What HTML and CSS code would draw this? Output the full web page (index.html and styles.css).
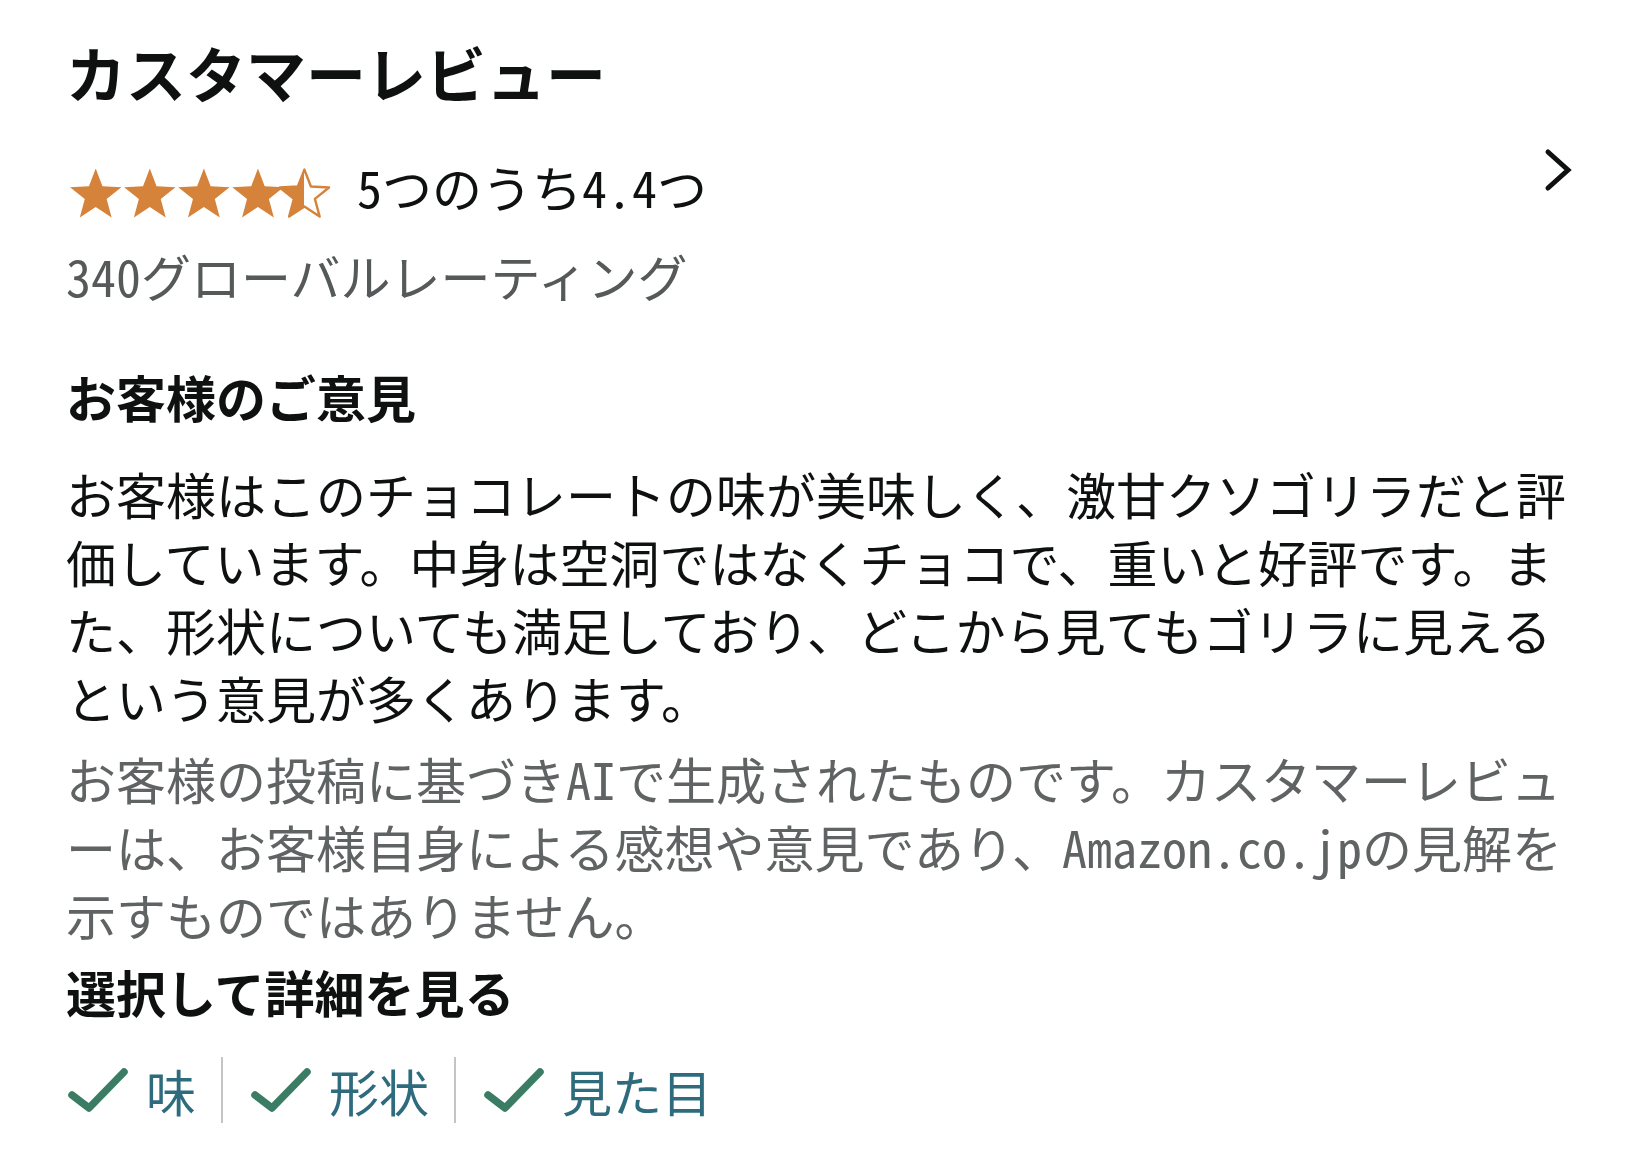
FILE: index.html
```html
<!DOCTYPE html>
<html lang="ja">
<head>
<meta charset="utf-8">
<title>カスタマーレビュー</title>
<link rel="stylesheet" href="styles.css">
</head>
<body>
<main class="page">
  <h1 class="title">カスタマーレビュー</h1>
  <div class="rating-row">
    <svg class="stars" width="276" height="52" viewBox="0 0 264 50" aria-hidden="true">
      <defs>
        <polygon id="star" points="25,0.5 31.5,17.5 49.7,18.5 35.5,29.8 40.3,47.5 25,37.5 9.7,47.5 14.5,29.8 0.3,18.5 18.5,17.5"/>
        <linearGradient id="half" x1="0" x2="1" y1="0" y2="0">
          <stop offset="50%" stop-color="#d5823a"/>
          <stop offset="50%" stop-color="#ffffff"/>
        </linearGradient>
      </defs>
      <use href="#star" x="0" fill="#d5823a"/>
      <use href="#star" x="52" fill="#d5823a"/>
      <use href="#star" x="104" fill="#d5823a"/>
      <use href="#star" x="156" fill="#d5823a"/>
      <use href="#star" x="209" fill="url(#half)" stroke="#d5823a" stroke-width="2.4" stroke-linejoin="round" transform="translate(1 1) scale(0.96)" style="transform-box: fill-box"/>
    </svg>
    <span class="rating-text">5つのうち4.4つ</span>
    <svg class="chevron" width="34" height="46" viewBox="0 0 34 46" aria-hidden="true">
      <path d="M7 5 L27 23 L7 41" fill="none" stroke="#0f1111" stroke-width="5" stroke-linecap="round" stroke-linejoin="miter"/>
    </svg>
  </div>
  <p class="count">340グローバルレーティング</p>

  <h2 class="heading">お客様のご意見</h2>
  <p class="summary">お客様はこのチョコレートの味が美味しく、激甘クソゴリラだと評価しています。中身は空洞ではなくチョコで、重いと好評です。また、形状についても満足しており、どこから見てもゴリラに見えるという意見が多くあります。</p>
  <p class="note">お客様の投稿に基づきAIで生成されたものです。カスタマーレビューは、お客様自身による感想や意見であり、Amazon.co.jpの見解を示すものではありません。</p>

  <h2 class="heading select-heading">選択して詳細を見る</h2>
  <ul class="tags">
    <li class="tag">
      <svg class="check" width="60" height="48" viewBox="0 0 60 48" aria-hidden="true"><path d="M4 29 L21 42 L56 6" fill="none" stroke="#3a7d64" stroke-width="7.5" stroke-linecap="round" stroke-linejoin="round"/></svg>
      <span class="tag-label">味</span>
    </li>
    <li class="divider"></li>
    <li class="tag">
      <svg class="check" width="60" height="48" viewBox="0 0 60 48" aria-hidden="true"><path d="M4 29 L21 42 L56 6" fill="none" stroke="#3a7d64" stroke-width="7.5" stroke-linecap="round" stroke-linejoin="round"/></svg>
      <span class="tag-label">形状</span>
    </li>
    <li class="divider"></li>
    <li class="tag">
      <svg class="check" width="60" height="48" viewBox="0 0 60 48" aria-hidden="true"><path d="M4 29 L21 42 L56 6" fill="none" stroke="#3a7d64" stroke-width="7.5" stroke-linecap="round" stroke-linejoin="round"/></svg>
      <span class="tag-label">見た目</span>
    </li>
  </ul>
</main>
</body>
</html>
```
FILE: styles.css
```css
* { box-sizing: border-box; }

html, body {
  margin: 0;
  padding: 0;
  background: #ffffff;
}

body {
  font-family: "Noto Sans CJK JP", "Noto Sans", sans-serif;
  font-feature-settings: "hwid" 1;
  color: #0f1111;
  font-size: 50px;
  line-height: 67.7px;
}

.page {
  padding: 32px 66px 40px 66px;
}

.title {
  margin: 0;
  font-size: 60px;
  font-weight: 700;
  line-height: 80px;
  letter-spacing: 0;
}

.rating-row {
  display: flex;
  align-items: center;
  height: 68px;
  margin-top: 40px;
}

.stars {
  display: block;
  margin-left: 3px;
  margin-top: 16px;
  flex: none;
}

.rating-text {
  margin-left: 12px;
  font-size: 50px;
  line-height: 68px;
}

.chevron {
  display: block;
  margin-left: auto;
  margin-right: 3px;
  align-self: flex-start;
  margin-top: -5px;
}

.count {
  margin: 22px 0 0 0;
  color: #565959;
}

.heading {
  margin: 53px 0 0 0;
  font-size: 50px;
  font-weight: 700;
  line-height: 67.7px;
}

.summary {
  margin: 30px 0 0 0;
}

.note {
  margin: 14px 0 0 0;
  color: #606363;
}

.select-heading {
  margin-top: 10px;
}

.tags {
  list-style: none;
  margin: 30px 0 0 0;
  padding: 0 0 0 2px;
  display: flex;
  align-items: center;
}

.tag {
  display: flex;
  align-items: center;
}

.check {
  display: block;
  flex: none;
}

.tag-label {
  margin-left: 18px;
  color: #2d6b7d;
  font-size: 50px;
  line-height: 68px;
}

.divider {
  width: 2px;
  height: 66px;
  background: #c4c4c4;
  margin: 0 28px 0 25px;
}
```
